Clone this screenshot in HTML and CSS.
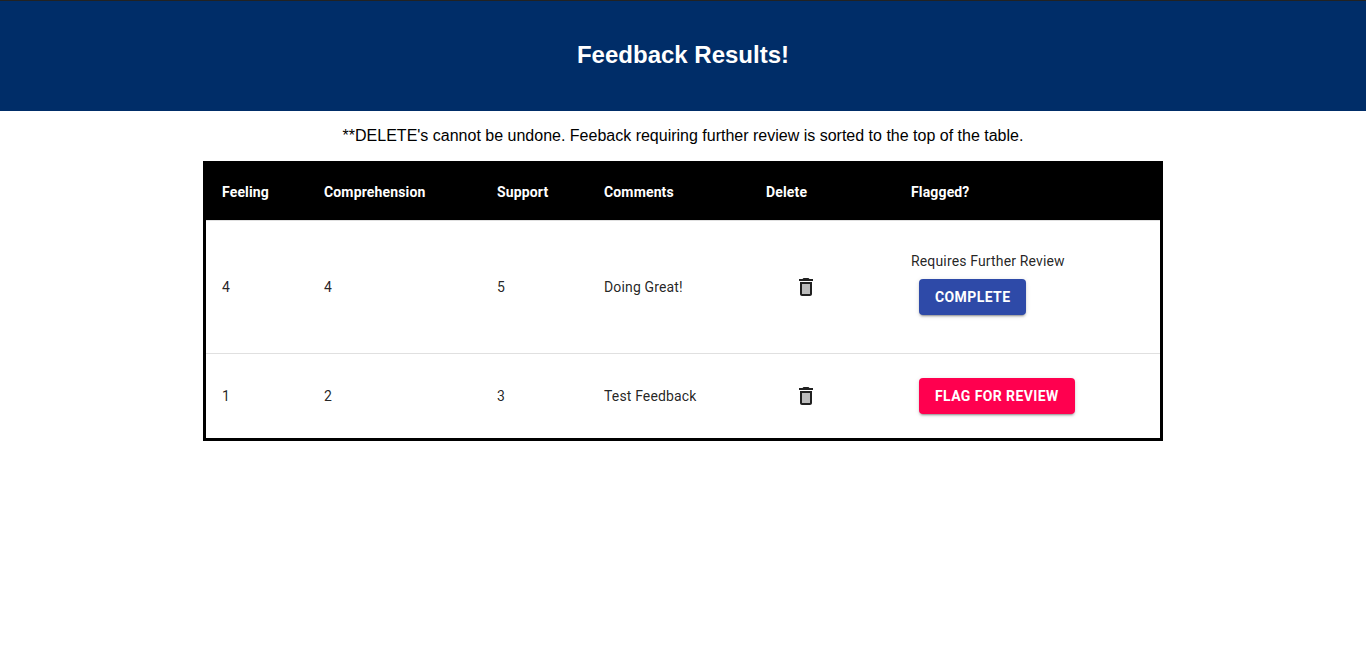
FILE: index.html
```html
<!DOCTYPE html>
<html lang="en">
<head>
<meta charset="utf-8">
<title>Feedback Results</title>
<meta name="viewport" content="width=device-width, initial-scale=1">
<link rel="stylesheet" href="styles.css">
</head>
<body>
<header class="banner">
  <h1 class="banner-title">Feedback Results!</h1>
</header>
<main class="content">
  <p class="notice">**DELETE's cannot be undone. Feeback requiring further review is sorted to the top of the table.</p>
  <table class="results">
    <colgroup>
      <col class="col-feeling">
      <col class="col-comprehension">
      <col class="col-support">
      <col class="col-comments">
      <col class="col-delete">
      <col class="col-flagged">
    </colgroup>
    <thead>
      <tr>
        <th scope="col">Feeling</th>
        <th scope="col">Comprehension</th>
        <th scope="col">Support</th>
        <th scope="col">Comments</th>
        <th scope="col">Delete</th>
        <th scope="col">Flagged?</th>
      </tr>
    </thead>
    <tbody>
      <tr>
        <td>4</td>
        <td>4</td>
        <td>5</td>
        <td>Doing Great!</td>
        <td>
          <button class="button button-icon" type="button" aria-label="Delete">
            <svg class="icon" viewBox="0 0 24 24" aria-hidden="true"><path d="M8 9h8v10H8z" opacity=".3"/><path d="M15.5 4l-1-1h-5l-1 1H5v2h14V4zM6 19c0 1.1.9 2 2 2h8c1.1 0 2-.9 2-2V7H6v12zM8 9h8v10H8V9z"/></svg>
          </button>
        </td>
        <td>
          <div class="review">
            <span>Requires Further Review</span>
            <button class="button button-primary" type="button">Complete</button>
          </div>
        </td>
      </tr>
      <tr>
        <td>1</td>
        <td>2</td>
        <td>3</td>
        <td>Test Feedback</td>
        <td>
          <button class="button button-icon" type="button" aria-label="Delete">
            <svg class="icon" viewBox="0 0 24 24" aria-hidden="true"><path d="M8 9h8v10H8z" opacity=".3"/><path d="M15.5 4l-1-1h-5l-1 1H5v2h14V4zM6 19c0 1.1.9 2 2 2h8c1.1 0 2-.9 2-2V7H6v12zM8 9h8v10H8V9z"/></svg>
          </button>
        </td>
        <td>
          <button class="button button-secondary" type="button">Flag for review</button>
        </td>
      </tr>
    </tbody>
  </table>
</main>
</body>
</html>
```
FILE: styles.css
```css
* {
  box-sizing: border-box;
}

body {
  margin: 0;
  background: #fff;
  color: #000;
  font-family: "Liberation Sans", Arial, sans-serif;
  font-size: 16px;
}

.banner {
  padding: 40px 16px 42px;
  border-top: 1px solid #222;
  background: #002d68;
  color: #fff;
  text-align: center;
}

.banner-title {
  margin: 0;
  font-size: 24px;
  line-height: 28px;
}

.content {
  max-width: 960px;
  margin: 0 auto;
}

.notice {
  margin: 16px 0;
  line-height: 18px;
  text-align: center;
}

.results {
  width: 100%;
  border: 3px solid #000;
  border-spacing: 0;
  table-layout: fixed;
  color: rgba(0, 0, 0, 0.87);
  font-family: Roboto, sans-serif;
  font-size: 14px;
  line-height: 20px;
  letter-spacing: 0.01071em;
  text-align: left;
}

.col-feeling { width: 102px; }
.col-comprehension { width: 173px; }
.col-support { width: 107px; }
.col-comments { width: 162px; }
.col-delete { width: 145px; }
.col-flagged { width: auto; }

.results th,
.results td {
  padding: 16px;
  border-bottom: 1px solid #e0e0e0;
}

.results th {
  background: #000;
  color: #fff;
  font-weight: 700;
  line-height: 24px;
}

.results tbody tr:last-child td {
  border-bottom: 0;
}

.review {
  display: flex;
  flex-direction: column;
  align-items: flex-start;
  padding: 14px 0;
}

.button {
  display: flex;
  align-items: center;
  justify-content: center;
  min-width: 64px;
  height: 36px;
  margin: 8px;
  padding: 0 16px;
  border: 0;
  border-radius: 4px;
  color: #fff;
  font: 700 14px/24px Roboto, sans-serif;
  letter-spacing: 0.02857em;
  text-transform: uppercase;
  cursor: pointer;
}

.button-icon {
  padding: 0 8px;
  background: transparent;
  color: rgba(0, 0, 0, 0.87);
}

.button-primary,
.button-secondary {
  box-shadow: 0 3px 1px -2px rgba(0, 0, 0, 0.2), 0 2px 2px 0 rgba(0, 0, 0, 0.14), 0 1px 5px 0 rgba(0, 0, 0, 0.12);
}

.button-primary {
  background: #2e4aa8;
}

.button-secondary {
  background: #ff004f;
}

.icon {
  width: 24px;
  height: 24px;
  fill: currentColor;
}
```
